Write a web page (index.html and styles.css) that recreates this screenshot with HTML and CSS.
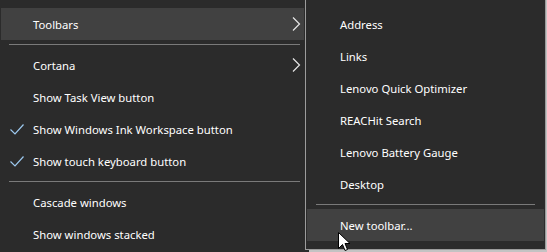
FILE: index.html
```html
<!DOCTYPE html>
<html lang="en">
<head>
    <meta charset="UTF-8">
    <title>Taskbar menu</title>
    <link rel="stylesheet" href="styles.css">
</head>
<body>
    <div class="menu">
        <div class="item active">Toolbars
            <svg class="arrow" width="9" height="14" viewBox="0 0 9 14"><path d="M1 0.5 L7.5 7 L1 13.5" /></svg>
        </div>
        <div class="sep"></div>
        <div class="item">Cortana
            <svg class="arrow" width="9" height="14" viewBox="0 0 9 14"><path d="M1 0.5 L7.5 7 L1 13.5" /></svg>
        </div>
        <div class="item">Show Task View button</div>
        <div class="item">
            <svg class="check" width="14" height="11" viewBox="0 0 14 11"><path d="M0.5 5.5 L5 10 L13.5 0.5" /></svg>
            Show Windows Ink Workspace button
        </div>
        <div class="item">
            <svg class="check" width="14" height="11" viewBox="0 0 14 11"><path d="M0.5 5.5 L5 10 L13.5 0.5" /></svg>
            Show touch keyboard button
        </div>
        <div class="sep"></div>
        <div class="item">Cascade windows</div>
        <div class="item">Show windows stacked</div>
    </div>

    <div class="submenu">
        <div class="item">Address</div>
        <div class="item">Links</div>
        <div class="item">Lenovo Quick Optimizer</div>
        <div class="item">REACHit Search</div>
        <div class="item">Lenovo Battery Gauge</div>
        <div class="item">Desktop</div>
        <div class="sep"></div>
        <div class="item active">New toolbar...</div>
    </div>

    <svg class="cursor" width="13" height="21" viewBox="0 0 13 21">
        <path d="M0.5 0.5 L0.5 16.5 L4.5 12.5 L7 18.5 L9.5 17.5 L7 11.5 L12 11.5 Z" />
    </svg>
</body>
</html>
```

FILE: styles.css
```css
* { margin: 0; padding: 0; box-sizing: border-box; }
body { background: #c3c3c3; height: 252px; overflow: hidden; position: relative;
       font-family: "Noto Sans", "Segoe UI", sans-serif; font-size: 11.3px; color: #fff; }

.menu { width: 309px; height: 252px; background: #2b2b2b; padding: 8px 1px 0 1px; }
.menu .item { height: 32px; display: flex; align-items: center; padding-left: 32px; position: relative; }
.menu .sep { height: 9px; padding: 4px 8px; }
.menu .sep::after { content: ""; display: block; height: 1px; background: #7a7a7a; }
.menu .item.active { background: #414141; margin-right: 4px; }

.arrow { position: absolute; left: 291px; top: 9px; }
.arrow path { fill: none; stroke: #e6e6e6; stroke-width: 1.2; }
.check { position: absolute; left: 9px; top: 11px; }
.check path { fill: none; stroke: #9cc8ee; stroke-width: 1.2; }

.submenu { position: absolute; left: 305px; top: 0; width: 241px; height: 250px;
           background: #2b2b2b; border: 1px solid #9c9c9c; border-top: 0; padding: 8px 1px 0 1px; }
.submenu .item { height: 32px; display: flex; align-items: center; padding-left: 33px; }
.submenu .sep { height: 9px; padding: 4px 9px 4px 9px; }
.submenu .sep::after { content: ""; display: block; height: 1px; background: #7a7a7a; }
.submenu .item.active { background: #414141; }

.cursor { position: absolute; left: 338px; top: 232px; }
.cursor path { fill: #fff; stroke: #000; stroke-width: 1; }
```
